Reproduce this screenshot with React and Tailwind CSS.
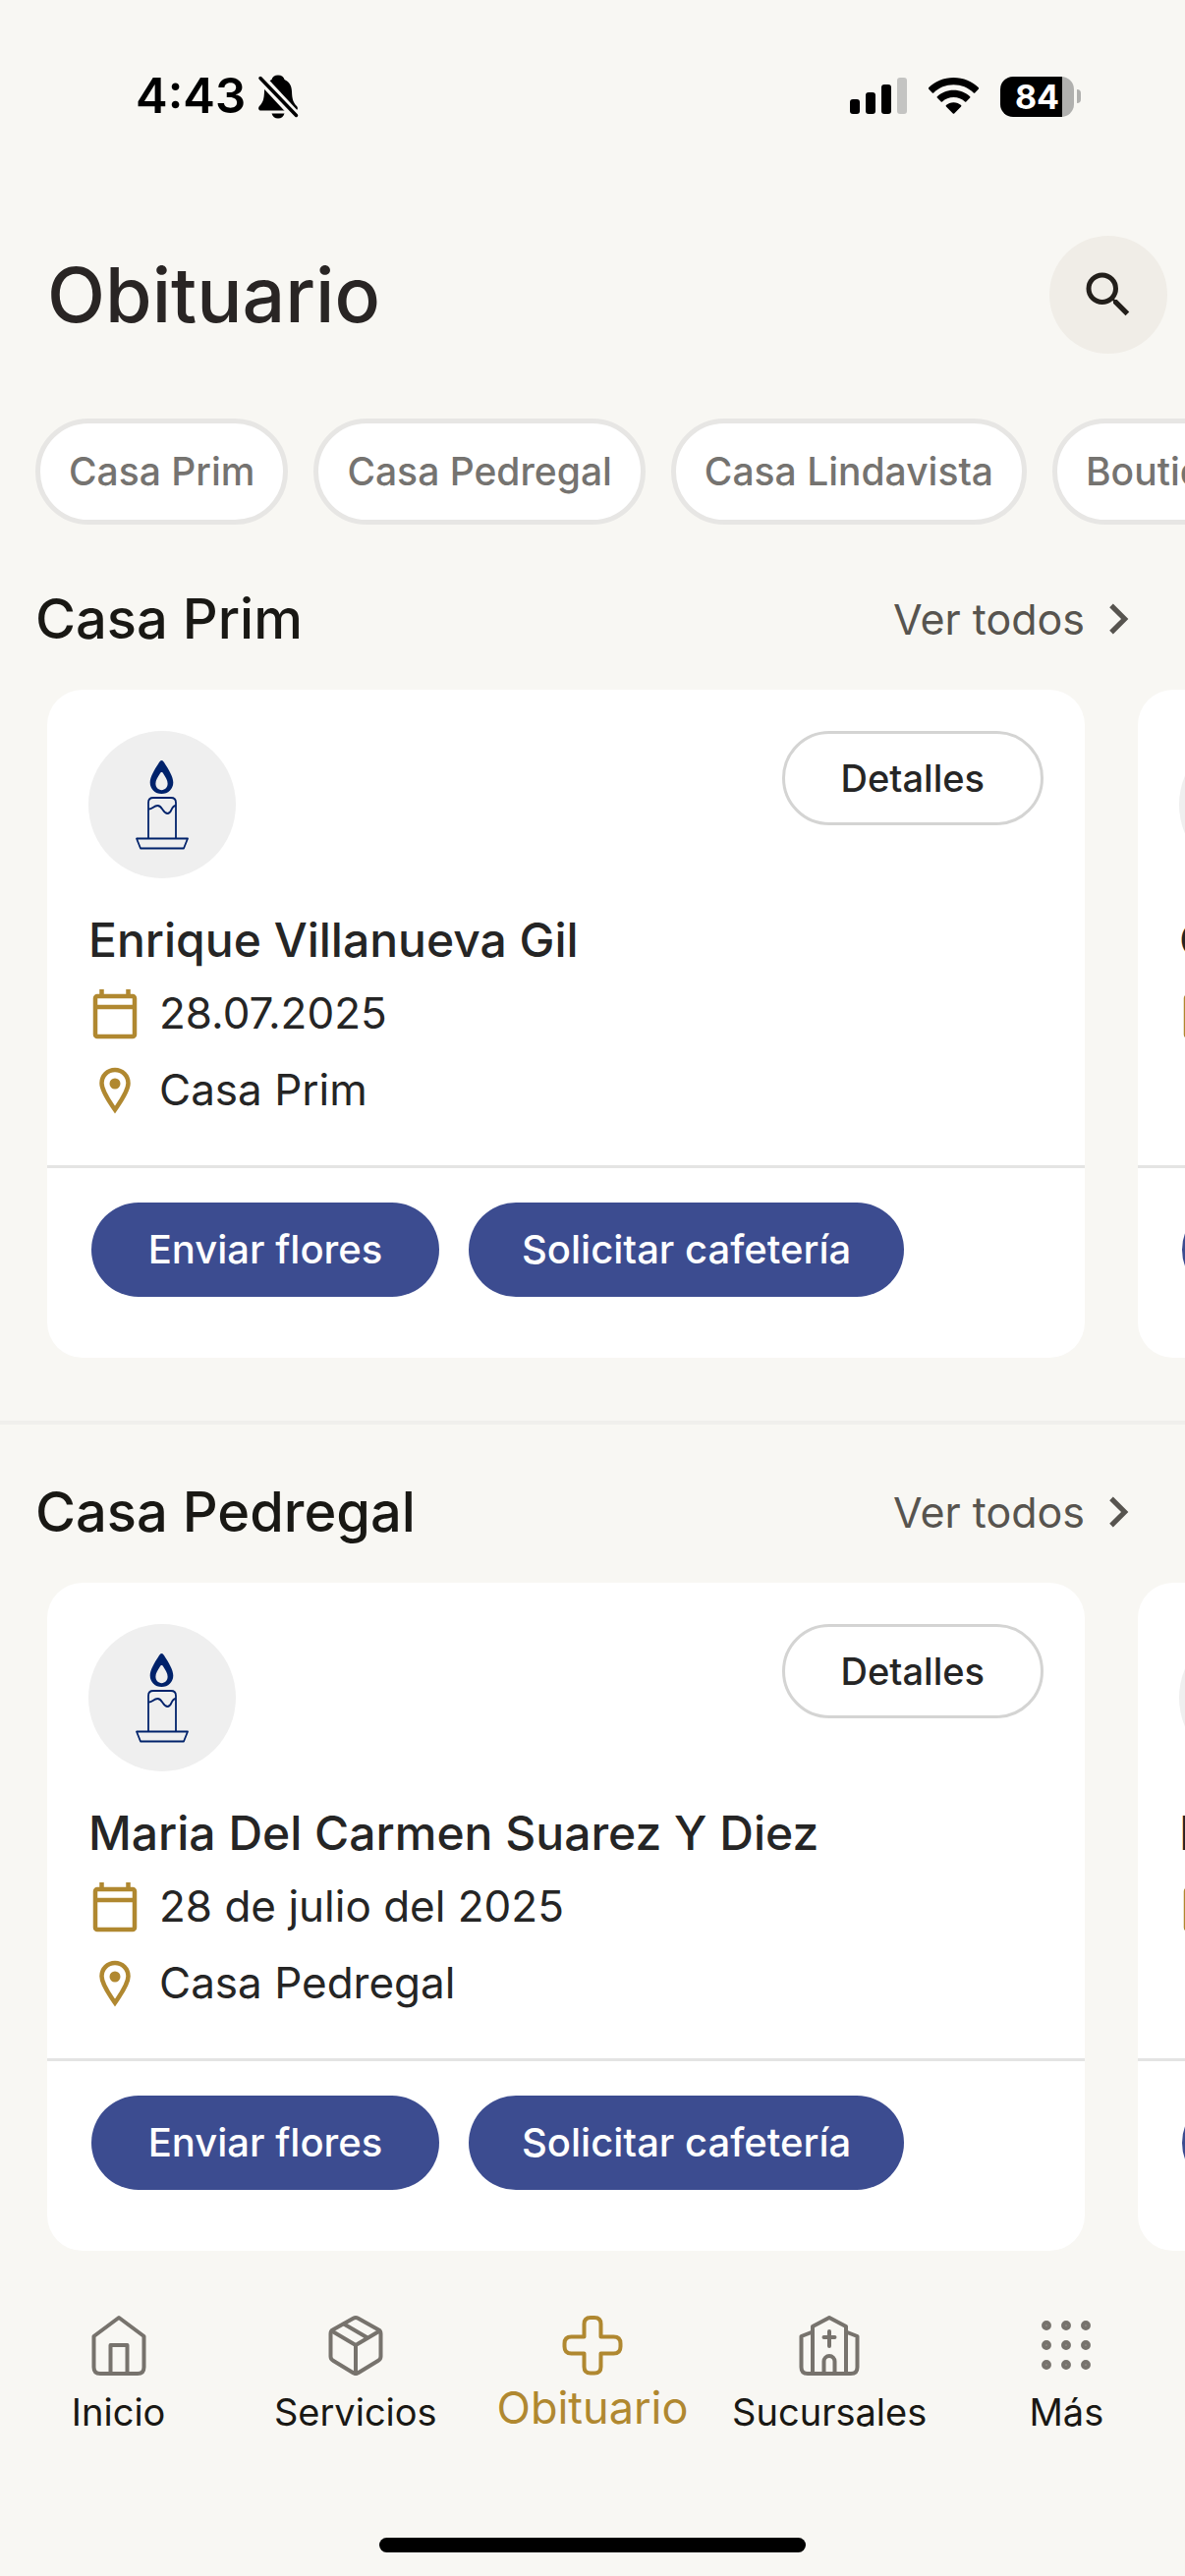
import { MdChevronRight, MdSearch } from "react-icons/md";

const locations = ["Casa Prim", "Casa Pedregal", "Casa Lindavista", "Boutique"];

const sections = [
  {
    title: "Casa Prim",
    people: [
      { name: "Enrique Villanueva Gil", date: "28.07.2025", place: "Casa Prim" },
      { name: "Carlos", date: "28.07.2025", place: "Casa Prim" },
    ],
  },
  {
    title: "Casa Pedregal",
    people: [
      { name: "Maria Del Carmen Suarez Y Diez", date: "28 de julio del 2025", place: "Casa Pedregal" },
      { name: "Maria", date: "28 de julio del 2025", place: "Casa Pedregal" },
    ],
  },
];

function StatusBar() {
  return (
    <div className="flex h-[196px] items-center justify-between pl-[138px] pr-[106px] text-black">
      <div className="flex items-center gap-3">
        <span className="text-[49px] font-semibold leading-[60px]">4:43</span>
        <svg className="h-[46px] w-[42px]" viewBox="0 0 42 46" aria-label="Silencio">
          <path
            d="M21 1.5c3.600 0 6 2 6.500 4.500 5 2.200 7.300 6.500 7.500 12 .2 8 1.500 11.500 5 15 1.600 1.800 1 4.500-1.500 4.500h-35C1 37.500 .4 34.800 2 33c3.500-3.500 4.800-7 5-15 .2-5.500 2.500-9.800 7.500-12C15 3.500 17.400 1.500 21 1.500Z"
            fill="currentColor"
          />
          <path d="M14.500 40.500h13c-.8 3-3.300 5-6.500 5s-5.700-2-6.500-5Z" fill="currentColor" />
          <path d="M0 1 42 46" stroke="#f8f7f3" strokeWidth="10" />
          <path d="M3 4.500 39.500 42.500" stroke="currentColor" strokeWidth="3.500" strokeLinecap="round" />
        </svg>
      </div>
      <div className="flex items-center">
        <svg className="h-[38px] w-[58px]" viewBox="0 0 58 38" aria-label="Señal">
          <rect x="0" y="22" width="10" height="15" rx="3" />
          <rect x="16" y="15" width="10" height="22" rx="3" />
          <rect x="32" y="7" width="10" height="30" rx="3" />
          <rect x="48" y="0" width="10" height="37" rx="3" fill="#c4c4c2" />
        </svg>
        <svg className="ml-[22px] h-[38px] w-[51px]" viewBox="0 0 51 38" aria-label="Wi-Fi">
          <path d="M25.500 0C35.500 0 44.500 4 51 10.200c.3.400.3.900 0 1.300l-3.800 3.900c-.4.400-1 .4-1.400 0C40.400 10.200 33.300 7.300 25.500 7.300S10.600 10.200 5.200 15.400c-.4.400-1 .4-1.400 0L0 11.500c-.3-.4-.3-.9 0-1.300C6.500 4 15.500 0 25.500 0Z" />
          <path d="M25.500 12.700c6.500 0 12.300 2.500 16.700 6.500.4.400.4 1 0 1.400l-3.900 3.900c-.4.400-.9.400-1.300 0-3-2.700-7-4.400-11.500-4.400s-8.500 1.700-11.500 4.400c-.4.400-.9.400-1.300 0l-3.900-3.900c-.4-.4-.4-1 0-1.400 4.400-4 10.200-6.500 16.700-6.500Z" />
          <path d="M25.500 25.200c3 0 5.600 1.100 7.600 2.900.4.400.4 1 0 1.400l-6.900 7c-.4.400-1 .4-1.400 0l-6.900-7c-.4-.4-.4-1 0-1.400 2-1.800 4.600-2.900 7.600-2.900Z" />
        </svg>
        <div className="ml-[22px] flex items-center gap-[3px]">
          <div className="flex h-[41px] w-[75px] justify-center overflow-hidden rounded-[13px] bg-linear-to-r from-black from-84% to-[#b0b0ae] to-84%">
            <span className="text-[34px] font-bold leading-[41px] text-white">84</span>
          </div>
          <div className="h-[14px] w-[4px] rounded-r-full bg-[#b0b0ae]" />
        </div>
      </div>
    </div>
  );
}

function Candle() {
  return (
    <svg className="size-[150px] rounded-full bg-[#efefef]" viewBox="0 0 150 150" fill="none" stroke="#00226b" aria-hidden="true">
      <path
        fillRule="evenodd"
        stroke="none"
        fill="#00226b"
        d="M74.500 30c1 0 1.700.8 2.500 2 4.500 7 9.300 14.500 9.300 20.500 0 6.700-5.200 11.500-11.800 11.500s-11.800-4.800-11.800-11.500c0-6 4.800-13.500 9.300-20.500.8-1.200 1.500-2 2.500-2Zm0 12c-.7 0-1.100.5-1.600 1.300-2.300 3.700-4.500 6.700-4.500 10.300 0 3.900 2.600 6.600 6.100 6.600s6.100-2.700 6.100-6.600c0-3.600-2.200-6.600-4.500-10.300-.5-.8-.9-1.300-1.600-1.300Z"
      />
      <path strokeWidth="1.800" d="M61 110V73q0-5 5-5h18q5 0 5 5v37M61 79.500c4 .5 5-3.500 9.500-3.500 5 0 5 8 10 8s3-8 8.500-8" />
      <path strokeWidth="1.800" strokeLinejoin="round" d="M49 109.500h52l-4 10H53z" />
    </svg>
  );
}

function CalendarIcon() {
  return (
    <svg className="size-[54px]" viewBox="0 0 54 54" fill="none" stroke="#b08830" strokeWidth="4.500" aria-hidden="true">
      <rect x="7" y="10" width="40" height="41" rx="2" />
      <path d="M7 21h40M13.500 3v7M40.500 3v7" />
    </svg>
  );
}

function PinIcon() {
  return (
    <svg className="size-[54px]" viewBox="0 0 54 54" fill="none" stroke="#b08830" strokeWidth="4.500" aria-hidden="true">
      <path d="M27 47.500C22 40 13.500 29 13.500 20.500a13.500 13.500 0 0 1 27 0C40.500 29 32 40 27 47.500Z" />
      <circle cx="27" cy="21" r="5.500" fill="#b08830" stroke="none" />
    </svg>
  );
}

function PersonCard({ person }) {
  return (
    <article className="w-[calc(100%-102px)] shrink-0 rounded-[36px] bg-white text-[#252525]">
      <div className="px-[42px] pb-[38px] pt-[42px]">
        <div className="flex items-start justify-between">
          <Candle />
          <button className="h-24 rounded-full border-[3px] border-[#d4d4d3] px-[57px] text-[38px] font-medium">
            Detalles
          </button>
        </div>
        <h3 className="mt-7 whitespace-nowrap text-[48px] font-medium leading-[70px]">{person.name}</h3>
        <p className="flex h-[78px] items-center gap-[18px] whitespace-nowrap text-[44px]">
          <CalendarIcon />
          {person.date}
        </p>
        <p className="flex h-[78px] items-center gap-[18px] whitespace-nowrap text-[44px]">
          <PinIcon />
          {person.place}
        </p>
      </div>
      <div className="flex gap-[30px] border-t-[3px] border-[#e4e4e3] px-[45px] pb-[62px] pt-[35px]">
        <button className="h-24 min-w-[354px] shrink-0 rounded-full bg-[#3c4c90] px-[54px] text-[40px] font-medium text-white">
          Enviar flores
        </button>
        <button className="h-24 min-w-[354px] shrink-0 rounded-full bg-[#3c4c90] px-[54px] text-[40px] font-medium text-white">
          Solicitar cafetería
        </button>
      </div>
    </article>
  );
}

function Section({ section }) {
  return (
    <section className="border-b-4 border-[#f0efec] pb-16 pt-[53px] last:border-b-0 last:pb-[60px]">
      <div className="flex h-[72px] items-center justify-between pl-9 pr-[37px]">
        <h2 className="text-[56px] font-medium text-[#191814]">{section.title}</h2>
        <a href="#todos" className="flex items-center gap-[3px] text-[43px] text-[#57544f]">
          Ver todos
          <MdChevronRight className="size-[62px]" />
        </a>
      </div>
      <div className="mt-9 flex gap-[54px] overflow-x-auto pl-12 [scrollbar-width:none]">
        {section.people.map((person) => (
          <PersonCard key={person.name} person={person} />
        ))}
      </div>
    </section>
  );
}

function NavIcon({ children }) {
  return (
    <svg
      className="size-[72px]"
      viewBox="0 0 72 72"
      fill="none"
      stroke="currentColor"
      strokeWidth="4"
      strokeLinecap="round"
      strokeLinejoin="round"
      aria-hidden="true"
    >
      {children}
    </svg>
  );
}

const tabs = [
  {
    label: "Inicio",
    icon: (
      <NavIcon>
        <path d="M36 8 61.500 27v31.500q0 6.500-6.500 6.500H17q-6.500 0-6.500-6.500V27ZM27.500 65V36h17v29" />
      </NavIcon>
    ),
  },
  {
    label: "Servicios",
    icon: (
      <NavIcon>
        <path d="M33.500 8.700q2.500-1.400 5 0L59 20.300q2.500 1.400 2.500 4.200v23q0 2.800-2.500 4.200L38.500 64.300q-2.500 1.400-5 0L13 51.700q-2.500-1.400-2.500-4.200v-23q0-2.800 2.500-4.200Z" />
        <path d="M11.500 21.500 36 36l24.500-14.500M36 36v29M24 14.500 48 28.500" />
      </NavIcon>
    ),
  },
  {
    label: "Obituario",
    active: true,
    icon: (
      <NavIcon>
        <path d="M27.500 14.500q0-6.500 6.500-6.500h4q6.500 0 6.500 6.500v13h13q7 0 7 7v3q0 7-7 7h-13v13.500q0 6.500-6.500 6.500h-4q-6.500 0-6.500-6.500V44.500h-13q-7 0-7-7v-3q0-7 7-7h13Z" />
      </NavIcon>
    ),
  },
  {
    label: "Sucursales",
    icon: (
      <NavIcon>
        <path d="M19 65V17L36 8l17 9v48M19 22.500 7.500 27v31.500q0 6.500 6.500 6.500h44q6.500 0 6.500-6.500V27L53 22.500" />
        <path d="M36 22v15M30.500 28h11M30.500 65V52.500a5.500 5.500 0 0 1 11 0V65" />
      </NavIcon>
    ),
  },
  {
    label: "Más",
    icon: (
      <NavIcon>
        {[16, 36, 56].map((y) =>
          [16, 36, 56].map((x) => <circle key={`${x}-${y}`} cx={x} cy={y} r="2.700" strokeWidth="4.500" />)
        )}
      </NavIcon>
    ),
  },
];

function TabBar() {
  return (
    <nav className="grid grid-cols-5">
      {tabs.map((tab) =>
        tab.active ? (
          <a key={tab.label} href="#seccion" aria-current="page" className="flex flex-col items-center text-[#b08830]">
            {tab.icon}
            <span className="text-[45px] leading-[56px]">{tab.label}</span>
          </a>
        ) : (
          <a key={tab.label} href="#seccion" className="flex flex-col items-center gap-1 text-[#77736d]">
            {tab.icon}
            <span className="text-[38px] leading-[56px] text-[#191814]">{tab.label}</span>
          </a>
        )
      )}
    </nav>
  );
}

export default function App() {
  return (
    <div className="flex min-h-screen flex-col bg-[#f8f7f3] font-['Inter',sans-serif]">
      <StatusBar />
      <header className="mt-11 flex items-center justify-between pl-12 pr-[18px]">
        <h1 className="text-[77px] font-medium leading-[120px] text-[#292524]">Obituario</h1>
        <button aria-label="Buscar" className="flex size-[120px] items-center justify-center rounded-full bg-[#f0ede7] text-[#231f1b]">
          <MdSearch className="size-[60px]" />
        </button>
      </header>
      <div className="mb-[7px] mt-[66px] flex gap-[26px] overflow-x-auto pl-9 [scrollbar-width:none]">
        {locations.map((name) => (
          <button
            key={name}
            className="h-[108px] shrink-0 whitespace-nowrap rounded-full border-[5px] border-[#e7e6e4] bg-white px-[29px] text-[39px] font-medium text-[#757370]"
          >
            {name}
          </button>
        ))}
      </div>
      <main>
        {sections.map((section) => (
          <Section key={section.title} section={section} />
        ))}
      </main>
      <footer className="mt-auto pb-6">
        <TabBar />
        <div className="mx-auto mt-[100px] h-[15px] w-[36%] rounded-full bg-black" />
      </footer>
    </div>
  );
}
